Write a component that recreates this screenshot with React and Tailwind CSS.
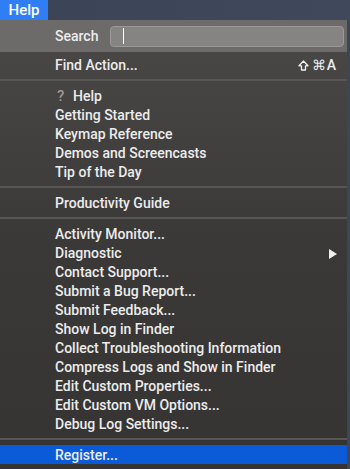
import React from 'react';

const groups = [
  [{ label: 'Help', icon: true }, { label: 'Getting Started' }, { label: 'Keymap Reference' }, { label: 'Demos and Screencasts' }, { label: 'Tip of the Day' }],
  [{ label: 'Productivity Guide' }],
  [
    { label: 'Activity Monitor...' },
    { label: 'Diagnostic', submenu: true },
    { label: 'Contact Support...' },
    { label: 'Submit a Bug Report...' },
    { label: 'Submit Feedback...' },
    { label: 'Show Log in Finder' },
    { label: 'Collect Troubleshooting Information' },
    { label: 'Compress Logs and Show in Finder' },
    { label: 'Edit Custom Properties...' },
    { label: 'Edit Custom VM Options...' },
    { label: 'Debug Log Settings...' },
  ],
];

const ShiftIcon = () => (
  <svg width="11" height="11" viewBox="0 0 11 11" className="mr-[3px]">
    <path d="M5.5 1 L10 5.8 H7.5 V10 H3.5 V5.8 H1 Z" fill="none" stroke="#f0f0f0" strokeWidth="1.3" strokeLinejoin="round" />
  </svg>
);

const Separator = () => (
  <div className="h-3 flex items-center">
    <div className="h-[2px] w-full bg-[#575655]" />
  </div>
);

const Item = ({ item, active }) => (
  <div className={`h-[19px] flex items-center pl-[55px] pr-[10px] pt-[2px] ${active ? 'bg-[#0b5bd9]' : ''}`}>
    {item.icon && <span className="w-[18px] text-[#9b9a99] text-[15px] pl-[2px]">?</span>}
    <span className="flex-1">{item.label}</span>
    {item.shortcut && (
      <span className="flex items-center tracking-[1px]">
        <ShiftIcon />
        {item.shortcut}
      </span>
    )}
    {item.submenu && (
      <svg width="8" height="10" viewBox="0 0 8 10">
        <path d="M0 0 L8 5 L0 10 Z" fill="#f0f0f0" />
      </svg>
    )}
  </div>
);

export default function App() {
  return (
    <div
      className="w-[350px] h-[469px] overflow-hidden bg-[#3d4658] text-[14px] text-[#ececec] font-medium"
      style={{ fontFamily: 'Roboto, "Liberation Sans", Arial, sans-serif' }}
    >
      <div className="h-5 flex bg-gradient-to-r from-[#3a4456] to-[#3f495b]">
        <div className="w-12 h-5 bg-[#2f7ef6] text-white text-[15px] flex items-center justify-center">Help</div>
      </div>
      <div className="w-[347px] h-[449px] bg-gradient-to-b from-[#4a4948] via-[#3a3938] to-[#353433] flex flex-col">
        <div className="h-8 bg-[#6c6b6a] flex items-center pl-[55px] pr-[3px]">
          <span className="w-[55px]">Search</span>
          <div className="flex-1 h-[21px] rounded-[4px] border border-[#9a9998] bg-[#858483] flex items-center pl-[12px]">
            <div className="w-px h-[16px] bg-white" />
          </div>
        </div>
        <div className="h-[3px]" />
        <Item item={{ label: 'Find Action...', shortcut: '⌘A' }} />
        <Separator />
        {groups.map((g, i) => (
          <React.Fragment key={i}>
            {g.map((item) => (
              <Item key={item.label} item={item} />
            ))}
            <Separator />
          </React.Fragment>
        ))}
        <Item item={{ label: 'Register...' }} active />
      </div>
    </div>
  );
}
